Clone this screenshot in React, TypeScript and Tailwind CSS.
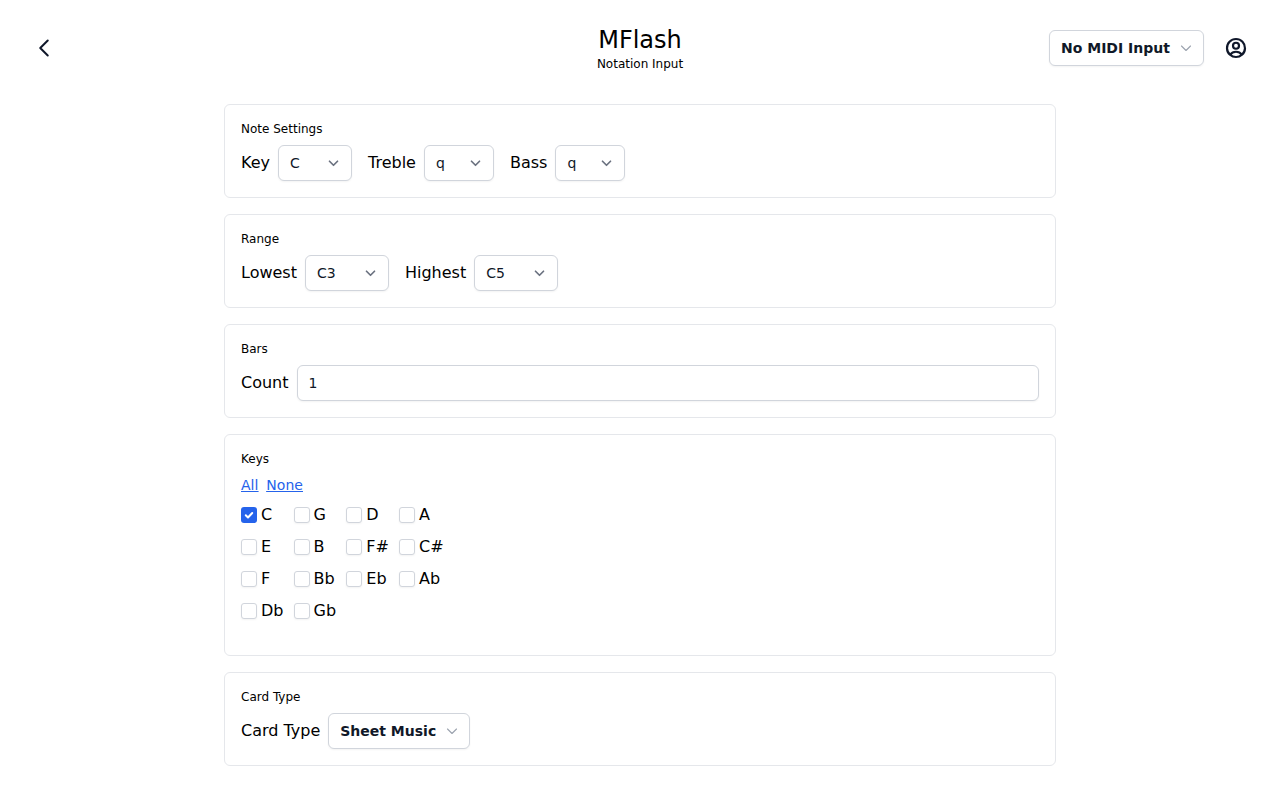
import React from "react";

const Chevron = ({ light }: { light?: boolean }) => (
  <svg viewBox="0 0 20 20" fill="none" className="w-5 h-5">
    <path
      d={light ? "M5.5 8l4.5 4.5L14.5 8" : "M5.5 8.25l4 4 4-4"}
      stroke={light ? "#9ca3af" : "#6b7280"}
      strokeWidth={light ? "1.1" : "1.7"}
      strokeLinecap="round"
      strokeLinejoin="round"
    />
  </svg>
);

const Select = ({ value, width, bold }: { value: string; width: string; bold?: boolean }) => (
  <div
    className={`flex items-center justify-between h-9 pl-[11px] pr-[7px] bg-white border border-gray-300 rounded-md shadow-xs text-sm text-gray-900 ${width} ${bold ? "font-bold" : ""}`}
  >
    <span>{value}</span>
    <Chevron light={bold} />
  </div>
);

const Card = ({ title, children, className = "" }: { title: string; children: React.ReactNode; className?: string }) => (
  <section className={`border border-gray-200 rounded-md p-4 ${className}`}>
    <h2 className="text-xs leading-4 text-black">{title}</h2>
    {children}
  </section>
);

const Label = ({ children }: { children: React.ReactNode }) => <span className="text-base text-black">{children}</span>;

const keys = ["C", "G", "D", "A", "E", "B", "F#", "C#", "F", "Bb", "Eb", "Ab", "Db", "Gb"];

export default function App() {
  return (
    <div className="bg-white min-h-[800px] font-['DejaVu_Sans',sans-serif] text-black">
      <header className="flex items-center h-24 px-8">
        <div className="flex-1 flex">
          <svg viewBox="0 0 24 24" fill="none" className="w-6 h-6">
            <path d="M15.75 19.5L8.25 12l7.5-7.5" stroke="#0f172a" strokeWidth="2" strokeLinecap="round" strokeLinejoin="round" />
          </svg>
        </div>
        <div className="flex flex-col items-center">
          <h1 className="text-2xl leading-8 text-black">MFlash</h1>
          <p className="text-xs leading-4 text-black">Notation Input</p>
        </div>
        <div className="flex-1 flex items-center justify-end gap-5">
          <Select value="No MIDI Input" width="w-[155px]" bold />
          <svg viewBox="0 0 24 24" fill="none" className="w-6 h-6" stroke="#0f172a" strokeWidth="2.2" strokeLinecap="round" strokeLinejoin="round">
            <path d="M17.982 18.725A7.488 7.488 0 0012 15.75a7.488 7.488 0 00-5.982 2.975m11.964 0a9 9 0 10-11.963 0m11.963 0A8.966 8.966 0 0112 21a8.966 8.966 0 01-5.982-2.275M15 9.75a3 3 0 11-6 0 3 3 0 016 0z" />
          </svg>
        </div>
      </header>
      <main className="w-[832px] mx-auto mt-2 flex flex-col gap-4">
        <Card title="Note Settings">
          <div className="flex items-center mt-2">
            <Label>Key</Label>
            <div className="ml-2"><Select value="C" width="w-[74px]" /></div>
            <div className="ml-4"><Label>Treble</Label></div>
            <div className="ml-2"><Select value="q" width="w-[70px]" /></div>
            <div className="ml-4"><Label>Bass</Label></div>
            <div className="ml-2"><Select value="q" width="w-[70px]" /></div>
          </div>
        </Card>
        <Card title="Range">
          <div className="flex items-center mt-2">
            <Label>Lowest</Label>
            <div className="ml-2"><Select value="C3" width="w-[84px]" /></div>
            <div className="ml-4"><Label>Highest</Label></div>
            <div className="ml-2"><Select value="C5" width="w-[84px]" /></div>
          </div>
        </Card>
        <Card title="Bars">
          <div className="flex items-center mt-2">
            <Label>Count</Label>
            <div className="ml-2 flex-1 flex items-center h-9 pl-[11px] pr-3 bg-white border border-gray-300 rounded-md shadow-xs text-sm text-gray-900">1</div>
          </div>
        </Card>
        <Card title="Keys" className="h-[222px]">
          <div className="flex gap-2 mt-2 text-sm leading-5 text-[#2563eb] underline">
            <a>All</a>
            <a>None</a>
          </div>
          <div className="grid w-fit grid-cols-[auto_auto_auto_auto] gap-x-[10.12px] gap-y-2 mt-2">
            {keys.map((k) => (
              <label key={k} className="flex items-center gap-1 h-6 text-base text-black">
                {k === "C" ? (
                  <span className="w-4 h-4 rounded-[3px] bg-[#2563eb] flex items-center justify-center">
                    <svg viewBox="0 0 16 16" className="w-4 h-4" fill="none" stroke="white" strokeWidth="2" strokeLinecap="round" strokeLinejoin="round">
                      <path d="M4.75 8.25l2.25 2.25 4.25-4.5" />
                    </svg>
                  </span>
                ) : (
                  <span className="w-4 h-4 rounded-[3px] border border-gray-300 bg-white shadow-xs" />
                )}
                <span>{k}</span>
              </label>
            ))}
          </div>
        </Card>
        <Card title="Card Type">
          <div className="flex items-center mt-2">
            <Label>Card Type</Label>
            <div className="ml-2"><Select value="Sheet Music" width="w-[142px]" bold /></div>
          </div>
        </Card>
      </main>
    </div>
  );
}
